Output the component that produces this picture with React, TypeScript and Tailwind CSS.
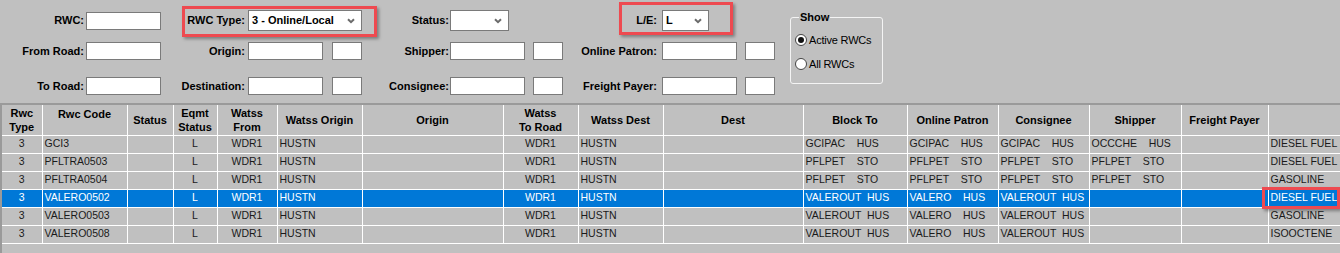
import React from "react";

type Row = {
  type: string;
  code: string;
  eqmt: string;
  from: string;
  wOrigin: string;
  toRoad: string;
  wDest: string;
  blockTo: string;
  patron: string;
  consignee: string;
  shipper: string;
  commodity: string;
  selected?: boolean;
};

const rows: Row[] = [
  { type: "3", code: "GCI3", eqmt: "L", from: "WDR1", wOrigin: "HUSTN", toRoad: "WDR1", wDest: "HUSTN", blockTo: "GCIPAC    HUS", patron: "GCIPAC    HUS", consignee: "GCIPAC    HUS", shipper: "OCCCHE    HUS", commodity: "DIESEL FUEL" },
  { type: "3", code: "PFLTRA0503", eqmt: "L", from: "WDR1", wOrigin: "HUSTN", toRoad: "WDR1", wDest: "HUSTN", blockTo: "PFLPET    STO", patron: "PFLPET    STO", consignee: "PFLPET    STO", shipper: "PFLPET    STO", commodity: "DIESEL FUEL" },
  { type: "3", code: "PFLTRA0504", eqmt: "L", from: "WDR1", wOrigin: "HUSTN", toRoad: "WDR1", wDest: "HUSTN", blockTo: "PFLPET    STO", patron: "PFLPET    STO", consignee: "PFLPET    STO", shipper: "PFLPET    STO", commodity: "GASOLINE" },
  { type: "3", code: "VALERO0502", eqmt: "L", from: "WDR1", wOrigin: "HUSTN", toRoad: "WDR1", wDest: "HUSTN", blockTo: "VALEROUT  HUS", patron: "VALERO    HUS", consignee: "VALEROUT  HUS", shipper: "", commodity: "DIESEL FUEL", selected: true },
  { type: "3", code: "VALERO0503", eqmt: "L", from: "WDR1", wOrigin: "HUSTN", toRoad: "WDR1", wDest: "HUSTN", blockTo: "VALEROUT  HUS", patron: "VALERO    HUS", consignee: "VALEROUT  HUS", shipper: "", commodity: "GASOLINE" },
  { type: "3", code: "VALERO0508", eqmt: "L", from: "WDR1", wOrigin: "HUSTN", toRoad: "WDR1", wDest: "HUSTN", blockTo: "VALEROUT  HUS", patron: "VALERO    HUS", consignee: "VALEROUT  HUS", shipper: "", commodity: "ISOOCTENE" },
];

const colWidths = [40, 85, 46, 44, 60, 85, 141, 75, 85, 140, 104, 91, 91, 92, 87, 72];

function Input({ w }: { w: string }) {
  return <div className={`${w} h-[18px] bg-white border border-[#7a7a7a]`} />;
}

function Chevron() {
  return (
    <svg width="8" height="6" viewBox="0 0 8 6" className="shrink-0">
      <path d="M1 1.2 L4 4.2 L7 1.2" fill="none" stroke="#6b6b6b" strokeWidth="2" />
    </svg>
  );
}

function Select({ w, value }: { w: string; value?: string }) {
  return (
    <div className={`${w} h-[21px] bg-white border border-[#7a7a7a] flex items-center justify-between pl-[3px] pr-[6px]`}>
      <span className="text-[11px] font-bold text-black">{value}</span>
      <Chevron />
    </div>
  );
}

function Label({ w, children }: { w: string; children: React.ReactNode }) {
  return <div className={`${w} text-right text-[11px] font-bold text-black shrink-0`}>{children}</div>;
}

function Radio({ checked, label }: { checked?: boolean; label: string }) {
  return (
    <div className="flex items-center gap-[2px] h-[14px]">
      <div className="w-[12px] h-[12px] rounded-full bg-white border border-[#444] flex items-center justify-center">
        {checked && <div className="w-[6px] h-[6px] rounded-full bg-[#111]" />}
      </div>
      <span className="text-[11px] text-black tracking-[-0.2px]">{label}</span>
    </div>
  );
}

export default function App() {
  return (
    <div className="relative w-[1340px] h-[253px] overflow-hidden bg-[#c0c0c0] font-['Liberation_Sans',Arial,sans-serif]">
      {/* Filters */}
      <div className="h-[103px] flex">
        <div className="flex flex-col">
          <div className="mt-[9px] h-[23px] grid grid-cols-[161px_201px_201px_212px] items-center">
            <div className="flex items-center gap-[2px]">
              <Label w="w-[84px]">RWC:</Label>
              <Input w="w-[75px]" />
            </div>
            <div className="flex items-center gap-[3px]">
              <Label w="w-[84px]">RWC Type:</Label>
              <Select w="w-[114px]" value="3 - Online/Local" />
            </div>
            <div className="flex items-center gap-[1px]">
              <Label w="w-[87px]">Status:</Label>
              <Select w="w-[59px]" />
            </div>
            <div className="flex items-center gap-[5px]">
              <Label w="w-[94px]">L/E:</Label>
              <Select w="w-[47px]" value="L" />
            </div>
          </div>

          <div className="mt-[9px] h-[20px] grid grid-cols-[161px_201px_201px_212px] items-center">
            <div className="flex items-center gap-[2px]">
              <Label w="w-[84px]">From Road:</Label>
              <Input w="w-[75px]" />
            </div>
            <div className="flex items-center gap-[3px]">
              <Label w="w-[84px]">Origin:</Label>
              <Input w="w-[75px]" />
              <div className="ml-[6px]"><Input w="w-[30px]" /></div>
            </div>
            <div className="flex items-center gap-[1px]">
              <Label w="w-[87px]">Shipper:</Label>
              <Input w="w-[75px]" />
              <div className="ml-[7px]"><Input w="w-[30px]" /></div>
            </div>
            <div className="flex items-center gap-[5px]">
              <Label w="w-[94px]">Online Patron:</Label>
              <Input w="w-[75px]" />
              <div className="ml-[3px]"><Input w="w-[30px]" /></div>
            </div>
          </div>

          <div className="mt-[15px] h-[20px] grid grid-cols-[161px_201px_201px_212px] items-center">
            <div className="flex items-center gap-[2px]">
              <Label w="w-[84px]">To Road:</Label>
              <Input w="w-[75px]" />
            </div>
            <div className="flex items-center gap-[3px]">
              <Label w="w-[84px]">Destination:</Label>
              <Input w="w-[75px]" />
              <div className="ml-[6px]"><Input w="w-[30px]" /></div>
            </div>
            <div className="flex items-center gap-[1px]">
              <Label w="w-[87px]">Consignee:</Label>
              <Input w="w-[75px]" />
              <div className="ml-[7px]"><Input w="w-[30px]" /></div>
            </div>
            <div className="flex items-center gap-[5px]">
              <Label w="w-[94px]">Freight Payer:</Label>
              <Input w="w-[75px]" />
              <div className="ml-[3px]"><Input w="w-[30px]" /></div>
            </div>
          </div>
        </div>

        {/* Show */}
        <fieldset className="ml-[15px] mt-[11px] w-[93px] h-[73px] border border-[#f4f4f4] rounded-[3px] pl-[4px] pt-[10px] flex flex-col gap-[10px]">
          <legend className="ml-[4px] px-[1px] text-[11px] font-bold text-black leading-[12px]">Show</legend>
          <Radio checked label="Active RWCs" />
          <Radio label="All RWCs" />
        </fieldset>
      </div>

      {/* Grid */}
      <div className="h-[150px] border-t-2 border-l-2 border-[#9a9a9a]">
        <table className="border-collapse table-fixed w-[1338px] text-[10.5px] text-[#1a1a1a]">
          <colgroup>
            {colWidths.map((w, i) => (
              <col key={i} style={{ width: w }} />
            ))}
          </colgroup>
          <thead>
            <tr className="h-[30px] text-[11px] font-bold text-black leading-[14px]">
              <th className="border-r border-b border-white font-bold">Rwc<br />Type</th>
              <th className="border-r border-b border-white font-bold align-top pt-[2px]">Rwc Code</th>
              <th className="border-r border-b border-white font-bold">Status</th>
              <th className="border-r border-b border-white font-bold">Eqmt<br />Status</th>
              <th className="border-r border-b border-white font-bold">Watss<br />From</th>
              <th className="border-r border-b border-white font-bold">Watss Origin</th>
              <th className="border-r border-b border-white font-bold">Origin</th>
              <th className="border-r border-b border-white font-bold">Watss<br />To Road</th>
              <th className="border-r border-b border-white font-bold">Watss Dest</th>
              <th className="border-r border-b border-white font-bold">Dest</th>
              <th className="border-r border-b border-white font-bold">Block To</th>
              <th className="border-r border-b border-white font-bold">Online Patron</th>
              <th className="border-r border-b border-white font-bold">Consignee</th>
              <th className="border-r border-b border-white font-bold">Shipper</th>
              <th className="border-r border-b border-white font-bold">Freight Payer</th>
              <th className="border-b border-white"></th>
            </tr>
          </thead>
          <tbody>
            {rows.map((r) => (
              <tr key={r.code} className={`h-[18px] ${r.selected ? "bg-[#0078d7] text-white" : ""}`}>
                <td className="border-r border-b border-white text-center">{r.type}</td>
                <td className="border-r border-b border-white pl-[2px]">{r.code}</td>
                <td className="border-r border-b border-white"></td>
                <td className="border-r border-b border-white text-center">{r.eqmt}</td>
                <td className="border-r border-b border-white text-center">{r.from}</td>
                <td className="border-r border-b border-white pl-[2px]">{r.wOrigin}</td>
                <td className="border-r border-b border-white"></td>
                <td className="border-r border-b border-white text-center">{r.toRoad}</td>
                <td className="border-r border-b border-white pl-[2px]">{r.wDest}</td>
                <td className="border-r border-b border-white"></td>
                <td className="border-r border-b border-white pl-[2px] whitespace-pre">{r.blockTo}</td>
                <td className="border-r border-b border-white pl-[2px] whitespace-pre">{r.patron}</td>
                <td className="border-r border-b border-white pl-[2px] whitespace-pre">{r.consignee}</td>
                <td className="border-r border-b border-white pl-[2px] whitespace-pre">{r.shipper}</td>
                <td className="border-r border-b border-white"></td>
                <td className="border-b border-white pl-[2px] whitespace-pre">{r.commodity}</td>
              </tr>
            ))}
          </tbody>
        </table>
      </div>

      {/* Annotation boxes */}
      <div className="absolute left-[182px] top-[6px] w-[195px] h-[31px] border-[3px] border-[#ee4a50] shadow-[2px_2px_3px_rgba(0,0,0,0.35)]" />
      <div className="absolute left-[619px] top-[2px] w-[114px] h-[33px] border-[3px] border-[#ee4a50] shadow-[2px_2px_3px_rgba(0,0,0,0.35)]" />
      <div className="absolute left-[1262px] top-[187px] w-[78px] h-[22px] border-[3px] border-[#ee4a50] shadow-[2px_2px_3px_rgba(0,0,0,0.35)]" />
    </div>
  );
}
